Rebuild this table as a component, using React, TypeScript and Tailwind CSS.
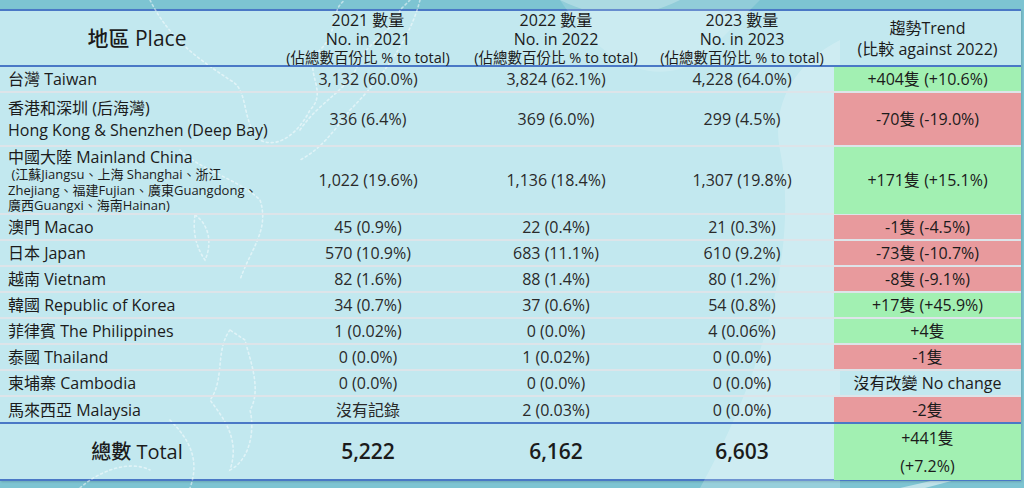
import type { ReactNode } from "react";

type Tone = "up" | "down" | "none";

type Row = {
  place: ReactNode;
  h: string;
  y21: string;
  y22: string;
  y23: string;
  trend: string;
  tone: Tone;
  last?: boolean;
};

const rows: Row[] = [
  { place: "台灣 Taiwan", h: "h-[26px]", y21: "3,132 (60.0%)", y22: "3,824 (62.1%)", y23: "4,228 (64.0%)", trend: "+404隻 (+10.6%)", tone: "up" },
  {
    place: (
      <>
        香港和深圳 (后海灣)
        <br />
        Hong Kong &amp; Shenzhen (Deep Bay)
      </>
    ),
    h: "h-[54px]",
    y21: "336 (6.4%)",
    y22: "369 (6.0%)",
    y23: "299 (4.5%)",
    trend: "-70隻 (-19.0%)",
    tone: "down",
  },
  {
    place: (
      <>
        <span className="block leading-[20px]">中國大陸 Mainland China</span>
        <span className="block text-[13px] leading-[15.5px]">
          &nbsp;(江蘇Jiangsu、上海 Shanghai、浙江
          <br />
          Zhejiang、福建Fujian、廣東Guangdong、
          <br />
          廣西Guangxi、海南Hainan)
        </span>
      </>
    ),
    h: "h-[68px]",
    y21: "1,022 (19.6%)",
    y22: "1,136 (18.4%)",
    y23: "1,307 (19.8%)",
    trend: "+171隻 (+15.1%)",
    tone: "up",
  },
  { place: "澳門 Macao", h: "h-[26px]", y21: "45 (0.9%)", y22: "22 (0.4%)", y23: "21 (0.3%)", trend: "-1隻 (-4.5%)", tone: "down" },
  { place: "日本 Japan", h: "h-[26px]", y21: "570 (10.9%)", y22: "683 (11.1%)", y23: "610 (9.2%)", trend: "-73隻 (-10.7%)", tone: "down" },
  { place: "越南 Vietnam", h: "h-[26px]", y21: "82 (1.6%)", y22: "88 (1.4%)", y23: "80 (1.2%)", trend: "-8隻 (-9.1%)", tone: "down" },
  { place: "韓國 Republic of Korea", h: "h-[26px]", y21: "34 (0.7%)", y22: "37 (0.6%)", y23: "54 (0.8%)", trend: "+17隻 (+45.9%)", tone: "up" },
  { place: "菲律賓 The Philippines", h: "h-[26px]", y21: "1 (0.02%)", y22: "0 (0.0%)", y23: "4 (0.06%)", trend: "+4隻", tone: "up" },
  { place: "泰國 Thailand", h: "h-[26px]", y21: "0 (0.0%)", y22: "1 (0.02%)", y23: "0 (0.0%)", trend: "-1隻", tone: "down" },
  { place: "柬埔寨 Cambodia", h: "h-[26px]", y21: "0 (0.0%)", y22: "0 (0.0%)", y23: "0 (0.0%)", trend: "沒有改變 No change", tone: "none" },
  { place: "馬來西亞 Malaysia", h: "h-[27px]", y21: "沒有記錄", y22: "2 (0.03%)", y23: "0 (0.0%)", trend: "-2隻", tone: "down", last: true },
];

const toneBg: Record<Tone, string> = {
  up: "bg-[#a2f0b2]",
  down: "bg-[#e89a9d]",
  none: "",
};

const cols = "grid grid-cols-[274px_188px_188px_184px_187px]";

function Backdrop() {
  // faint map outlines and light swooshes behind the table
  return (
    <svg className="pointer-events-none absolute inset-0" width="1024" height="488" viewBox="0 0 1024 488" fill="none">
      <path d="M560 0 C 600 60, 650 90, 700 60 L 760 0 Z" fill="#ffffff" opacity="0.16" />
      <path d="M700 488 C 760 380, 800 250, 780 150 C 770 100, 800 60, 840 40 L 840 488 Z" fill="#ffffff" opacity="0.2" />
      <g stroke="#ffffff" strokeWidth="1.6" strokeDasharray="2 3" opacity="0.5" strokeLinecap="round">
        <path d="M150 0 C 170 40, 200 60, 230 80 C 250 90, 240 120, 260 140 C 280 150, 300 130, 310 110 C 330 90, 300 70, 320 50 C 340 30, 330 10, 345 0" />
        <path d="M300 130 C 320 100, 350 90, 360 60 C 370 40, 395 30, 400 10 L 410 0" />
        <path d="M420 0 C 410 40, 380 80, 350 110 C 335 130, 320 150, 300 160" />
        <path d="M180 150 C 200 170, 240 180, 260 200 C 270 230, 250 250, 240 280" />
        <path d="M195 215 C 210 225, 212 245, 205 260 C 198 250, 192 235, 195 215" />
        <path d="M230 330 C 215 350, 225 380, 210 400 C 225 420, 240 440, 230 470 C 250 460, 255 430, 250 410 C 262 390, 250 360, 245 340 Z" />
        <path d="M170 420 C 190 440, 200 460, 190 488" />
        <path d="M80 488 C 100 470, 130 460, 150 470" />
      </g>
    </svg>
  );
}

export default function App() {
  return (
    <div
      className="relative w-[1024px] h-[488px] overflow-hidden bg-[#7dc4d2] pt-[9px] text-[#1b1b1b]"
      style={{ fontFamily: '"Open Sans", "Noto Sans CJK TC", sans-serif' }}
    >
      <svg className="pointer-events-none absolute inset-0" width="1024" height="488" viewBox="0 0 1024 488" fill="none">
        <path d="M560 0 C 600 20, 640 20, 680 0 Z" fill="#ffffff" opacity="0.25" />
        <path d="M900 488 L 935 480 L 955 480 L 925 488 Z" fill="#ffffff" opacity="0.5" />
      </svg>

      <div className="relative w-[1021px] bg-[#c2e8ef] border-t-2 border-b-2 border-[#4a78c6] shadow-[1px_1px_2px_rgba(0,0,0,0.15)]">
        <div className="pointer-events-none absolute left-0 top-[-11px]">
          <Backdrop />
        </div>

        {/* header */}
        <div className={`relative ${cols} h-[56px] border-b-2 border-[#4a78c6]`}>
          <div className="flex items-center justify-center text-[21px] font-medium">地區 Place</div>
          {["2021", "2022", "2023"].map((y) => (
            <div key={y} className="flex flex-col items-center justify-center leading-[19px]">
              <span className="text-[16px]">{y} 數量</span>
              <span className="text-[16px]">No. in {y}</span>
              <span className="text-[14.5px] leading-[18px]">(佔總數百份比 % to total)</span>
            </div>
          ))}
          <div className="flex flex-col items-center justify-center text-[16px] leading-[21px]">
            <span>趨勢Trend</span>
            <span>(比較 against 2022)</span>
          </div>
        </div>

        {/* body */}
        {rows.map((r, i) => (
          <div
            key={i}
            className={`relative ${cols} ${r.h} border-b-2 ${r.last ? "border-[#4a78c6]" : "border-[#dde4e9]"} text-[16px]`}
          >
            <div className="flex flex-col justify-center pl-2 leading-[22px]">{r.place}</div>
            <div className="flex items-center justify-center text-[#2a2a2a]">{r.y21}</div>
            <div className="flex items-center justify-center text-[#2a2a2a]">{r.y22}</div>
            <div className="flex items-center justify-center text-[#2a2a2a]">{r.y23}</div>
            <div className={`flex items-center justify-center ${toneBg[r.tone]}`}>{r.trend}</div>
          </div>
        ))}

        {/* total */}
        <div className={`relative ${cols} h-[55px]`}>
          <div className="flex items-center justify-center text-[20px] font-medium">總數 Total</div>
          <div className="flex items-center justify-center text-[21px] font-semibold">5,222</div>
          <div className="flex items-center justify-center text-[21px] font-semibold">6,162</div>
          <div className="flex items-center justify-center text-[21px] font-semibold">6,603</div>
          <div className="flex flex-col items-center justify-center bg-[#a2f0b2] text-[16px] leading-[28px]">
            <span>+441隻</span>
            <span>(+7.2%)</span>
          </div>
        </div>
      </div>
    </div>
  );
}
